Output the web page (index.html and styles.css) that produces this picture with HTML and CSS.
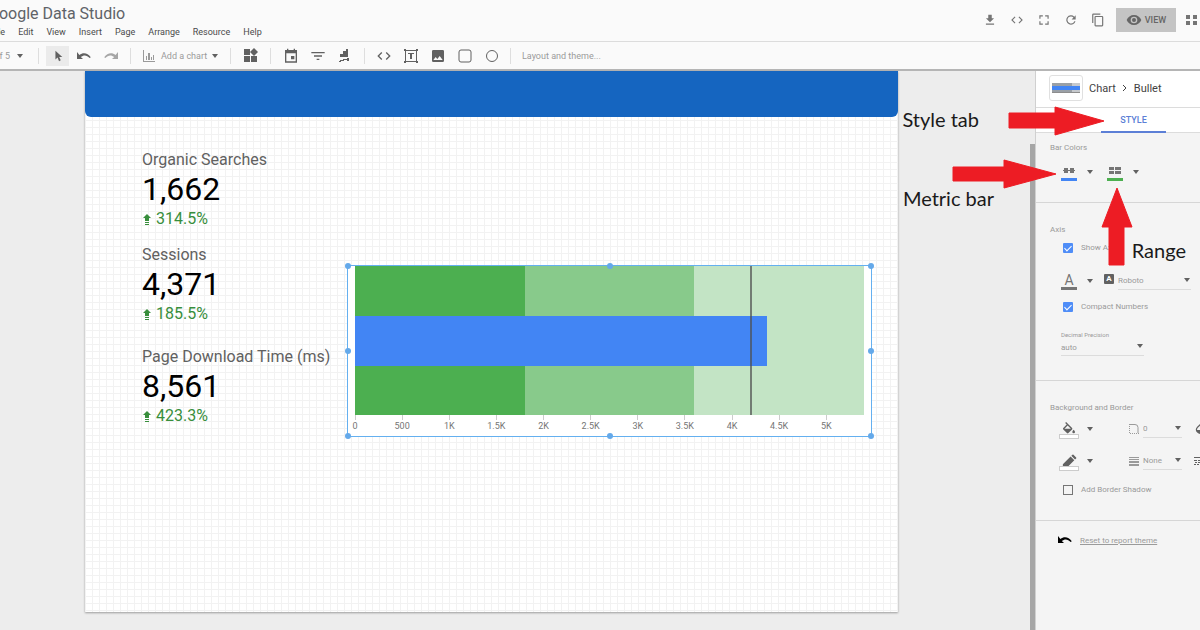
FILE: index.html
```html
<!DOCTYPE html>
<html lang="en">
<head>
    <meta charset="UTF-8">
    <meta name="viewport" content="width=device-width, initial-scale=1.0">
    <title>Google Data Studio</title>
    <link rel="stylesheet" href="styles.css">
</head>
<body>
    <header class="topbar">
        <div class="brand">
            <h1>Google Data Studio</h1>
            <nav class="menu">
                <a href="#">File</a>
                <a href="#">Edit</a>
                <a href="#">View</a>
                <a href="#">Insert</a>
                <a href="#">Page</a>
                <a href="#">Arrange</a>
                <a href="#">Resource</a>
                <a href="#">Help</a>
            </nav>
        </div>
        <div class="actions">
            <button class="icon-button" aria-label="Download"><svg width="14" height="14" viewBox="0 0 24 24"><path d="M19 9h-4V3H9v6H5l7 7 7-7zM5 18v2h14v-2H5z"/></svg></button>
            <button class="icon-button" aria-label="Embed"><svg width="14" height="14" viewBox="0 0 24 24"><path d="M9.4 16.6 4.8 12l4.600-4.600L8 6l-6 6 6 6 1.400-1.400zm5.200 0 4.600-4.600-4.600-4.600L16 6l6 6-6 6-1.400-1.400z"/></svg></button>
            <button class="icon-button" aria-label="Full screen"><svg width="14" height="14" viewBox="0 0 24 24"><path d="M4 4h6v2H6v4H4zM14 4h6v6h-2V6h-4zM4 14h2v4h4v2H4zM18 14h2v6h-6v-2h4z"/></svg></button>
            <button class="icon-button" aria-label="Refresh"><svg width="14" height="14" viewBox="0 0 24 24"><path d="M17.650 6.350A8 8 0 1 0 19.730 14h-2.080A6 6 0 1 1 12 6c1.660 0 3.140.690 4.220 1.780L13 11h7V4l-2.350 2.350z"/></svg></button>
            <button class="icon-button" aria-label="Copy"><svg width="14" height="14" viewBox="0 0 24 24"><path d="M16 1H4a2 2 0 0 0-2 2v14h2V3h12V1zm3 4H8a2 2 0 0 0-2 2v14a2 2 0 0 0 2 2h11a2 2 0 0 0 2-2V7a2 2 0 0 0-2-2zm0 16H8V7h11v14z"/></svg></button>
            <button class="view-button"><svg width="16" height="16" viewBox="0 0 24 24"><path fill-rule="evenodd" d="M12 4.500C7 4.500 2.730 7.610 1 12c1.730 4.390 6 7.500 11 7.500s9.270-3.110 11-7.500c-1.730-4.390-6-7.500-11-7.500zM12 17a5 5 0 1 1 0-10 5 5 0 0 1 0 10zm0-8a3 3 0 1 0 0 6 3 3 0 0 0 0-6z"/></svg>VIEW</button>
            <button class="apps-button" aria-label="Apps"><svg width="16" height="16" viewBox="0 0 16 16"><path d="M1 3h4v4H1zM8 3h4v4H8zM1 9h4v4H1zM8 9h4v4H8z"/></svg></button>
        </div>
    </header>

    <div class="toolbar">
        <button class="page-picker">1 of 5<span class="caret"></span></button>
        <div class="tools history">
            <button class="tool active" aria-label="Select"><svg width="12" height="12" viewBox="0 0 14 14"><path d="M4 1v10l2.500-2.200L8.200 13l2-1-1.800-3.800H12z"/></svg></button>
            <button class="tool" aria-label="Undo"><svg width="16" height="14" viewBox="0 0 16 14"><path d="M1 3v7h6L4.800 8C7.800 5.500 11 6 13.600 9l1.200-.8C11.600 3.800 7 3.300 3.400 6z"/></svg></button>
            <button class="tool muted" aria-label="Redo"><svg width="16" height="14" viewBox="0 0 16 14"><path d="M15 3v7H9l2.200-2C8.200 5.500 5 6 2.400 9l-1.200-.8C4.400 3.800 9 3.300 12.600 6z"/></svg></button>
        </div>
        <div class="tools add-chart">
            <button class="text-tool"><svg width="14" height="14" viewBox="0 0 14 14"><path d="M1 1h1v11h11v1H1zM4 7h1v4H4zM6 4h2v7H6zM9 8h1v3H9zM11 6h1v5h-1z"/></svg>Add a chart<span class="caret"></span></button>
        </div>
        <div class="tools">
            <button class="tool" aria-label="Community visualizations"><svg width="15" height="15" viewBox="0 0 15 15"><path d="M1 1h6v6H1zM1 8h6v6H1zM8 8h6v6H8zM11 0l4 4-4 4-4-4z"/></svg></button>
        </div>
        <div class="tools">
            <button class="tool" aria-label="Date range"><svg width="16" height="16" viewBox="0 0 24 24"><path d="M17 12h-5v5h5v-5zM16 1v2H8V1H6v2H3v19h18V3h-3V1h-2zm3 19H5V8h14v12z"/></svg></button>
            <button class="tool" aria-label="Filter"><svg width="16" height="16" viewBox="0 0 24 24"><path d="M10 18h4v-2h-4v2zM2 6v2h20V6H2zm4 7h12v-2H6v2z"/></svg></button>
            <button class="tool" aria-label="Data control"><svg width="16" height="16" viewBox="0 0 16 16"><path d="M3 6h3v3H3zM6 3h3v6H6zM9 1h2v8H9zM3 12h3v-1h4v-1h2v3h-2v-1H7v1H4v1H2v-1h1z"/></svg></button>
        </div>
        <div class="tools shapes">
            <button class="tool" aria-label="URL embed"><svg width="16" height="16" viewBox="0 0 24 24"><path d="M9.400 16.600 4.800 12l4.600-4.600L8 6l-6 6 6 6zM14.600 16.600l4.600-4.600-4.600-4.600L16 6l6 6-6 6z"/></svg></button>
            <button class="tool" aria-label="Text"><svg width="16" height="16" viewBox="0 0 16 16"><path class="line" d="M2.500 2.500h11v11h-11z"/><path d="M1 1h2v2H1zM13 1h2v2h-2zM1 13h2v2H1zM13 13h2v2h-2zM5 5h6v1H9v5H7V6H5z"/></svg></button>
            <button class="tool" aria-label="Image"><svg width="16" height="16" viewBox="0 0 24 24"><path d="M21 19V5a2 2 0 0 0-2-2H5a2 2 0 0 0-2 2v14a2 2 0 0 0 2 2h14a2 2 0 0 0 2-2zM8.500 13.500l2.500 3 3.500-4.500 4.500 6H5l3.500-4.500z"/></svg></button>
            <button class="tool" aria-label="Rectangle"><svg width="16" height="16" viewBox="0 0 16 16"><rect class="line" x="2" y="2" width="12" height="12" rx="2"/></svg></button>
            <button class="tool" aria-label="Circle"><svg width="16" height="16" viewBox="0 0 16 16"><circle class="line" cx="8" cy="8" r="5.500"/></svg></button>
        </div>
        <button class="theme-button">Layout and theme...</button>
    </div>

    <main class="workspace">
        <section class="report">
            <div class="banner"></div>
            <div class="report-body">
                <div class="scorecards">
                    <div class="scorecard">
                        <div class="metric">Organic Searches</div>
                        <div class="value">1,662</div>
                        <div class="delta"><svg width="10" height="12" viewBox="0 0 10 12"><path d="M5 1l4 4H7v3H3V5H1zM3 9h4v1H3zM3 11h4v1H3z"/></svg>314.5%</div>
                    </div>
                    <div class="scorecard">
                        <div class="metric">Sessions</div>
                        <div class="value">4,371</div>
                        <div class="delta"><svg width="10" height="12" viewBox="0 0 10 12"><path d="M5 1l4 4H7v3H3V5H1zM3 9h4v1H3zM3 11h4v1H3z"/></svg>185.5%</div>
                    </div>
                    <div class="scorecard last">
                        <div class="metric">Page Download Time (ms)</div>
                        <div class="value">8,561</div>
                        <div class="delta"><svg width="10" height="12" viewBox="0 0 10 12"><path d="M5 1l4 4H7v3H3V5H1zM3 9h4v1H3zM3 11h4v1H3z"/></svg>423.3%</div>
                    </div>
                </div>

                <div class="chart">
                    <div class="plot">
                        <div class="range dark"></div>
                        <div class="range medium"></div>
                        <div class="range light"></div>
                        <div class="bar" style="width: 80.94%"></div>
                        <div class="target" style="left: 77.78%"></div>
                    </div>
                    <div class="axis">
                        <span style="left: 0%">0</span>
                        <span style="left: 9.26%">500</span>
                        <span style="left: 18.52%">1K</span>
                        <span style="left: 27.78%">1.5K</span>
                        <span style="left: 37.04%">2K</span>
                        <span style="left: 46.30%">2.5K</span>
                        <span style="left: 55.56%">3K</span>
                        <span style="left: 64.81%">3.5K</span>
                        <span style="left: 74.07%">4K</span>
                        <span style="left: 83.33%">4.5K</span>
                        <span style="left: 92.59%">5K</span>
                    </div>
                    <i class="handle top left"></i>
                    <i class="handle top center"></i>
                    <i class="handle top right"></i>
                    <i class="handle middle left"></i>
                    <i class="handle middle right"></i>
                    <i class="handle bottom left"></i>
                    <i class="handle bottom center"></i>
                    <i class="handle bottom right"></i>
                </div>
            </div>
        </section>

        <div class="scroll-track"></div>

        <aside class="panel">
            <div class="panel-head">
                <span class="thumb"><svg width="28" height="10" viewBox="0 0 28 10"><path fill="#9aa0a6" d="M0 0h20v9H0z"/><path fill="#c6c9cd" d="M20 0h8v9h-8z"/><path fill="#4285f4" d="M0 3h28v4H0z"/><path fill="#8d8d8d" d="M0 9h28v1H0z"/></svg></span>
                <span>Chart</span>
                <svg width="6" height="8" viewBox="0 0 6 8"><path class="line" d="M1 1l3 3-3 3"/></svg>
                <span>Bullet</span>
            </div>
            <div class="tabs"><button class="tab">STYLE</button></div>

            <section class="group colors">
                <h2>Bar Colors</h2>
                <div class="row">
                    <button class="swatch blue" aria-label="Metric bar color"><svg width="14" height="8" viewBox="0 0 14 8"><path d="M2 1h4v2H2zM8 1h4v2H8zM1 3h12v1H1zM2 4h4v2H2zM8 4h4v2H8z"/></svg></button>
                    <span class="caret"></span>
                    <button class="swatch green" aria-label="Range color"><svg width="14" height="8" viewBox="0 0 14 8"><path d="M1 0h5v3H1zM7 0h6v3H7zM1 4h5v3H1zM7 4h6v3H7z"/></svg></button>
                    <span class="caret"></span>
                </div>
            </section>

            <section class="group axis-group">
                <h2>Axis</h2>
                <label class="check"><input type="checkbox" checked>Show Axis</label>
                <div class="row font-row">
                    <button class="swatch text-color" aria-label="Font color">A</button>
                    <span class="caret"></span>
                    <span class="font-icon">A</span>
                    <span class="select wide"><select aria-label="Font"><option>Roboto</option></select></span>
                </div>
                <label class="check"><input type="checkbox" checked>Compact Numbers</label>
                <div class="field">
                    <label for="precision">Decimal Precision</label>
                    <span class="select precision"><select id="precision"><option>auto</option></select></span>
                </div>
            </section>

            <section class="group border-group">
                <h2>Background and Border</h2>
                <div class="row">
                    <button class="swatch empty" aria-label="Background color"><svg width="16" height="14" viewBox="0 0 24 21"><path fill-rule="evenodd" d="M16.600 9 7.600 0 6.200 1.400l2.400 2.400-5.200 5.200a1.500 1.500 0 0 0 0 2.100l5.500 5.500a1.500 1.500 0 0 0 2.200 0l5.500-5.500a1.500 1.500 0 0 0 0-2.100zM5.200 10 10 5.200 14.800 10zM19 11.500s-2 2.200-2 3.500a2 2 0 0 0 4 0c0-1.300-2-3.500-2-3.500z"/></svg></button>
                    <span class="caret"></span>
                    <svg class="lead" width="10" height="10" viewBox="0 0 10 10"><path class="line dashed" d="M.5 0v9.500H10"/><path class="line" d="M1 .5h5a3 3 0 0 1 3 3V9"/></svg>
                    <span class="select small"><select aria-label="Border radius"><option>0</option></select></span>
                    <svg class="trail" width="12" height="12" viewBox="0 0 24 24"><path d="M12 2 6.300 7.700a8 8 0 1 0 11.400 0zM6 14c0-2 .600-3.300 1.800-4.400L12 5.300l4.200 4.300C17.400 10.700 18 12 18 14z"/></svg>
                </div>
                <div class="row">
                    <button class="swatch empty" aria-label="Border color"><svg width="15" height="14" viewBox="2 2 20 19"><path d="M3 16v5h5L18.500 10.500l-5-5zM21 8a1 1 0 0 0 0-1.400L17.400 3A1 1 0 0 0 16 3l-1.500 1.500 5 5z"/></svg></button>
                    <span class="caret"></span>
                    <svg class="lead" width="10" height="10" viewBox="0 0 10 10"><path d="M0 1h10v1H0zM0 3h10v1H0zM0 5h10v2H0zM0 8h10v2H0z"/></svg>
                    <span class="select small"><select aria-label="Border weight"><option>None</option></select></span>
                    <svg class="trail" width="12" height="10" viewBox="0 0 12 10"><path d="M0 1h12v1H0zM0 4h3v1H0zM4 4h3v1H4zM1 6h2v1H1zM4 6h2v1H4zM0 8h2v1H0zM3 8h2v1H3z"/></svg>
                </div>
                <label class="check"><input type="checkbox">Add Border Shadow</label>
            </section>

            <div class="reset">
                <svg width="16" height="14" viewBox="0 0 16 14"><path d="M1 3v7h6L4.800 8C7.800 5.500 11 6 13.600 9l1.200-.8C11.600 3.800 7 3.300 3.400 6z"/></svg>
                <a href="#">Reset to report theme</a>
            </div>
        </aside>

        <!-- callouts drawn over the editor -->
        <svg class="arrows" width="260" height="200" viewBox="0 0 260 200">
            <path d="M69 42h46v-6l49 14-49 14v-7H69z"/>
            <path d="M13 96h51v-7l52 14-52 14v-7H13z"/>
            <path d="M177 117l15 39h-8v38h-15v-38h-7z"/>
        </svg>
        <span class="callout style-note">Style tab</span>
        <span class="callout metric-note">Metric bar</span>
        <span class="callout range-note">Range</span>
    </main>
</body>
</html>
```

FILE: styles.css
```css
* {
    box-sizing: border-box;
}
body {
    margin: 0;
    min-height: 100vh;
    display: flex;
    flex-direction: column;
    overflow: hidden;
    font-family: Roboto, "Liberation Sans", sans-serif;
    font-size: 9px;
    color: #757575;
    background: #ededed;
}
button, select {
    margin: 0;
    padding: 0;
    border: none;
    background: none;
    font: inherit;
    color: inherit;
}
a {
    color: inherit;
    text-decoration: none;
}
svg {
    display: block;
    flex: none;
    fill: currentColor;
}
.line {
    fill: none;
    stroke: currentColor;
}
.dashed {
    stroke-dasharray: 1 1;
}
.caret {
    flex: none;
    border: 3px solid transparent;
    border-top: 4px solid #616161;
    border-bottom: none;
}

/* header */
.topbar {
    height: 42px;
    display: flex;
    justify-content: space-between;
    background: #fafafa;
    border-bottom: 1px solid #dcdcdc;
}
.brand {
    margin-left: -12px;
    padding-top: 4px;
}
h1 {
    margin: 0;
    font-size: 16px;
    line-height: 20px;
    font-weight: 400;
    color: #5f6368;
}
.menu {
    display: flex;
    gap: 13px;
    padding-left: 3px;
    line-height: 16px;
    color: #4a4a4a;
}
.actions {
    display: flex;
    align-items: center;
    padding-bottom: 2px;
}
.icon-button {
    width: 27px;
    display: flex;
    justify-content: center;
}
.view-button {
    width: 60px;
    height: 24px;
    margin-left: 5px;
    display: flex;
    align-items: center;
    justify-content: center;
    gap: 3px;
    background: #c4c4c4;
    font-weight: 500;
    color: #666;
}
.apps-button {
    width: 24px;
    padding-left: 9px;
    overflow: hidden;
}

/* toolbar */
.toolbar {
    height: 29px;
    display: flex;
    align-items: center;
    background: #fafafa;
    border-bottom: 2px solid #b5b5b5;
    color: #9a9a9a;
}
.page-picker {
    width: 38px;
    display: flex;
    align-items: center;
    justify-content: flex-end;
    gap: 7px;
    padding-right: 15px;
    white-space: nowrap;
}
.tools {
    height: 16px;
    display: flex;
    align-items: center;
    padding: 0 6px;
    border-left: 1px solid #dedede;
}
.history {
    padding-left: 4px;
}
.shapes {
    padding: 0 5px;
}
.add-chart {
    padding: 0 11px;
}
.tool {
    width: 27px;
    height: 20px;
    display: flex;
    align-items: center;
    justify-content: center;
    color: #616161;
}
.tool.active {
    width: 23px;
    margin: 0 1px 0 3px;
    background: #ebebeb;
}
.tool.muted {
    color: #a6a6a6;
}
.text-tool {
    width: 77px;
    display: flex;
    align-items: center;
    gap: 5px;
    white-space: nowrap;
}
.theme-button {
    height: 16px;
    padding-left: 11px;
    border-left: 1px solid #dedede;
}

/* canvas */
.workspace {
    position: relative;
    flex: 1;
    display: flex;
    align-items: stretch;
}
.report {
    flex: 1;
    margin: 0 132px 18px 85px;
    background-color: #fff;
    background-image:
        linear-gradient(to right, #f2f2f2 1px, transparent 1px),
        linear-gradient(to bottom, #f2f2f2 1px, transparent 1px);
    background-size: 7px 7px;
    box-shadow: 0 1px 2px rgba(0,0,0,0.35);
}
.banner {
    height: 46px;
    border-radius: 0 0 6px 6px;
    background: #1565c0;
}
.report-body {
    display: flex;
    padding: 33px 26px 0 57px;
}
.scorecards {
    width: 206px;
    display: flex;
    flex-direction: column;
    gap: 15px;
}
.scorecard.last {
    padding-top: 7px;
}
.metric {
    font-size: 16px;
    line-height: 20px;
    color: #616161;
    white-space: nowrap;
}
.value {
    font-size: 32px;
    line-height: 38px;
    color: #000;
}
.delta {
    display: flex;
    align-items: center;
    gap: 4px;
    font-size: 16px;
    line-height: 22px;
    color: #388e3c;
}

/* bullet chart with its selection frame */
.chart {
    position: relative;
    flex: 1;
    height: 172px;
    margin: 115px 0 0 -1px;
    padding: 0 7px;
    border: 1px solid #64b0f0;
    background: #fff;
}
.plot {
    position: relative;
    height: 149px;
    display: flex;
    align-items: center;
}
.range {
    flex: 1;
    height: 100%;
}
.range.dark {
    background: #4caf50;
}
.range.medium {
    background: #88ca8b;
}
.range.light {
    background: #c3e4c5;
}
.bar {
    position: absolute;
    left: 0;
    height: 50px;
    background: #4285f4;
}
.target {
    position: absolute;
    height: 100%;
    margin-left: -1px;
    border-left: 2px solid rgba(80,80,80,0.7);
}
.axis {
    position: relative;
    font-size: 9px;
}
.axis span {
    position: absolute;
    width: 40px;
    margin-left: -20px;
    text-align: center;
    line-height: 12px;
}
.axis span::before {
    content: "";
    display: block;
    width: 1px;
    height: 5px;
    margin: 0 auto;
    background: #ccc;
}
.handle {
    position: absolute;
    width: 6px;
    height: 6px;
    margin: -3px;
    border-radius: 50%;
    background: #64a9ea;
}
.top { top: 0; }
.middle { top: 50%; }
.bottom { top: 100%; }
.left { left: 0; }
.center { left: 50%; }
.right { left: 100%; }

/* side panel */
.scroll-track {
    width: 5px;
    margin-top: 73px;
    background: #a6a6a6;
}
.panel {
    width: 165px;
    overflow: hidden;
    background: #f4f4f4;
    border-left: 1px solid #d0d0d0;
    font-size: 8px;
    color: #9a9a9a;
}
.panel-head {
    height: 37px;
    display: flex;
    align-items: center;
    gap: 6px;
    padding: 0 0 2px 13px;
    background: #fff;
    border-bottom: 1px solid #dcdcdc;
    font-size: 11px;
    color: #424242;
}
.thumb {
    width: 34px;
    height: 26px;
    display: flex;
    align-items: center;
    justify-content: center;
    border: 1px solid #e0e0e0;
    border-radius: 3px;
}
.tabs {
    height: 25px;
    padding-left: 65px;
    background: #fff;
    border-bottom: 1px solid #dcdcdc;
}
.tab {
    width: 65px;
    height: 25px;
    border-bottom: 2px solid #5c7fd6;
    font-size: 9px;
    font-weight: 500;
    color: #5c7fd6;
}
.group {
    padding: 22px 0 0 14px;
    border-bottom: 1px solid #d6d6d6;
}
.colors {
    height: 70px;
    padding-top: 10px;
}
.axis-group {
    height: 178px;
}
.border-group {
    height: 140px;
}
h2 {
    margin: 0;
    font-size: 8px;
    line-height: 10px;
    font-weight: 400;
}
.row {
    display: flex;
    align-items: center;
    padding-left: 11px;
}
.colors .row {
    margin-top: 10px;
}
.swatch {
    flex: none;
    width: 16px;
    height: 18px;
    display: flex;
    align-items: center;
    justify-content: center;
    margin-right: 10px;
    border-bottom: 3px solid #4285f4;
    color: #757575;
}
.swatch.green {
    margin-left: 14px;
    border-bottom-color: #4caf50;
}
.swatch.text-color {
    border-bottom-color: #757575;
    font-size: 14px;
    line-height: 14px;
}
.swatch.empty {
    height: 20px;
    position: relative;
    border-bottom: none;
    color: #616161;
}
.swatch.empty::after {
    content: "";
    position: absolute;
    bottom: 0;
    width: 18px;
    height: 3px;
    border: 1px solid #ccc;
    background: #fff;
}
.check {
    height: 25px;
    display: flex;
    align-items: center;
    gap: 8px;
    padding-left: 13px;
}
input[type="checkbox"] {
    appearance: none;
    width: 10px;
    height: 10px;
    margin: 0;
    border: 1px solid #757575;
}
input[type="checkbox"]:checked {
    border: none;
    border-radius: 1px;
    background: #4f8df7;
}
input[type="checkbox"]:checked::after {
    content: "";
    display: block;
    width: 3px;
    height: 6px;
    margin: 1px 0 0 3px;
    border: solid #fff;
    border-width: 0 1px 1px 0;
    transform: rotate(45deg);
}
.font-row {
    height: 34px;
    padding-top: 8px;
}
.font-icon {
    width: 10px;
    height: 10px;
    margin: 0 4px 4px 11px;
    border-radius: 1px;
    background: #616161;
    color: #fff;
    font-weight: 700;
    line-height: 10px;
    text-align: center;
}
.select {
    position: relative;
    flex: none;
    border-bottom: 1px solid #dcdcdc;
}
.select::after {
    content: "";
    position: absolute;
    right: 1px;
    top: 5px;
    border: 3px solid transparent;
    border-top: 4px solid #616161;
    border-bottom: none;
}
.select select {
    appearance: none;
    display: block;
    width: 100%;
    height: 16px;
}
.select.wide {
    width: 73px;
}
.select.small {
    width: 39px;
}
.select.precision {
    display: block;
    width: 83px;
}
.field {
    margin-top: 12px;
    padding-left: 11px;
}
.field label {
    display: block;
    font-size: 6px;
    line-height: 8px;
}
.border-group .row {
    height: 32px;
}
.lead {
    margin: 0 4px 0 36px;
}
.trail {
    margin-left: 12px;
    color: #616161;
}
.reset {
    display: flex;
    align-items: center;
    gap: 7px;
    padding: 12px 0 0 21px;
}
.reset svg {
    color: #000;
}
.reset a {
    text-decoration: underline;
}

/* callouts */
.arrows {
    position: absolute;
    top: 0;
    right: 0;
    fill: #ed1c24;
    stroke: #ed1c24;
    stroke-linejoin: round;
}
.callout {
    position: absolute;
    font-family: Lato, sans-serif;
    font-size: 20px;
    line-height: 24px;
    color: #1a1a1a;
}
.style-note {
    top: 36px;
    right: 221px;
}
.metric-note {
    top: 115px;
    right: 206px;
}
.range-note {
    top: 167px;
    right: 14px;
}
```
